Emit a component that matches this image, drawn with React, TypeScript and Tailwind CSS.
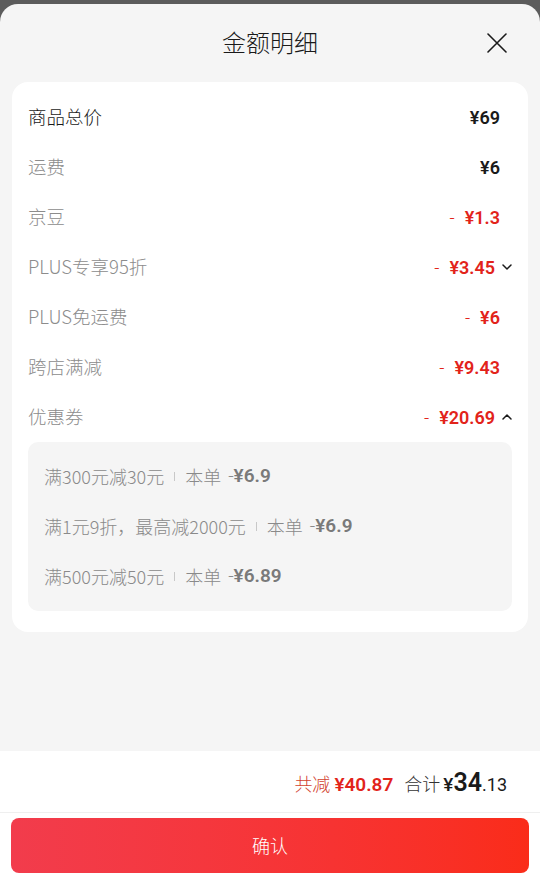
import React from "react";

const cjk = "font-['Noto_Sans_CJK_SC',sans-serif]";
const num = "font-['Roboto','Noto_Sans_CJK_SC',sans-serif]";

interface Row {
  label: string;
  value: string;
  minus?: boolean;
  strong?: boolean;
  chevron?: "up" | "down";
}

const rows: Row[] = [
  { label: "商品总价", value: "¥69", strong: true },
  { label: "运费", value: "¥6" },
  { label: "京豆", value: "¥1.3", minus: true },
  { label: "PLUS专享95折", value: "¥3.45", minus: true, chevron: "down" },
  { label: "PLUS免运费", value: "¥6", minus: true },
  { label: "跨店满减", value: "¥9.43", minus: true },
  { label: "优惠券", value: "¥20.69", minus: true, chevron: "up" },
];

const coupons = [
  { rule: "满300元减30元", amount: "¥6.9" },
  { rule: "满1元9折，最高减2000元", amount: "¥6.9" },
  { rule: "满500元减50元", amount: "¥6.89" },
];

function Chevron({ dir }: { dir: "up" | "down" }) {
  return (
    <svg width="10" height="6" viewBox="0 0 10 6" className="ml-[7px]">
      <path
        d={dir === "down" ? "M1 1l4 4 4-4" : "M1 5l4-4 4 4"}
        fill="none"
        stroke="#1a1a1a"
        strokeWidth="1.5"
        strokeLinecap="round"
        strokeLinejoin="round"
      />
    </svg>
  );
}

export default function App() {
  return (
    <div className={`w-[540px] h-[885px] bg-[#5c5c5c] flex flex-col overflow-hidden ${cjk}`}>
      <div className="h-[4px] shrink-0" />
      <div className="flex-1 flex flex-col bg-[#f5f5f5] rounded-t-[18px]">
        {/* header */}
        <div className="relative h-[78px] shrink-0 flex justify-center pt-[22px]">
          <div className="text-[24px] leading-[32px] font-light text-[#1a1a1a]">金额明细</div>
          <svg
            width="20"
            height="20"
            viewBox="0 0 20 20"
            className="absolute right-[33px] top-[29px]"
          >
            <path d="M1 1l18 18M19 1L1 19" stroke="#1a1a1a" strokeWidth="1.6" strokeLinecap="round" />
          </svg>
        </div>

        {/* detail card */}
        <div className="mx-[12px] bg-white rounded-[16px] px-[16px] pt-[10px] pb-[21px]">
          {rows.map((r) => (
            <div key={r.label} className="h-[50px] flex items-center justify-between">
              <span
                className={`text-[18.5px] font-light ${r.strong ? "text-[#1a1a1a]" : "text-[#8c8c8c]"}`}
              >
                {r.label}
              </span>
              <div className={`flex items-center ${r.chevron ? "" : "pr-[12px]"}`}>
                {r.minus ? (
                  <span className={`${num} text-[18px] font-light text-[#e2231a] mr-[10px]`}>-</span>
                ) : null}
                <span
                  className={`${num} text-[18px] font-semibold ${
                    r.minus ? "text-[#e2231a]" : "text-[#1a1a1a]"
                  }`}
                >
                  {r.value}
                </span>
                {r.chevron ? <Chevron dir={r.chevron} /> : null}
              </div>
            </div>
          ))}

          <div className="bg-[#f5f5f5] rounded-[10px] px-[16px] pt-[9px] pb-[10px]">
            {coupons.map((c) => (
              <div
                key={c.rule}
                className="h-[50px] flex items-center text-[18px] font-light text-[#8a8a8a]"
              >
                <span>{c.rule}</span>
                <span className="mx-[10px] w-[1px] h-[9px] bg-[#c8c8c8]" />
                <span>本单</span>
                <span className={`${num} text-[19px] ml-[7px]`}>-</span>
                <span className={`${num} text-[19px] font-semibold text-[#7a7a7a]`}>{c.amount}</span>
              </div>
            ))}
          </div>
        </div>

        <div className="flex-1" />

        {/* bottom bar */}
        <div className="bg-white h-[134px] shrink-0 flex flex-col">
          <div className="h-[62px] flex items-baseline justify-end pr-[33px] pt-[13px] border-b border-[#efefef]">
            <span className="text-[18px] font-light text-[#d2412f]">共减</span>
            <span className={`${num} text-[19px] font-semibold text-[#e2231a] ml-[4px]`}>
              ¥40.87
            </span>
            <span className="text-[18px] font-light text-[#333] ml-[11px]">合计</span>
            <span className={`${num} text-[19px] font-medium text-[#1a1a1a] ml-[3px]`}>¥</span>
            <span className={`${num} text-[25px] font-semibold text-[#1a1a1a]`}>34</span>
            <span className={`${num} text-[18px] text-[#1a1a1a]`}>.13</span>
          </div>
          <button className="mx-[11px] mt-[5px] h-[55px] rounded-[8px] bg-gradient-to-r from-[#f23c4c] to-[#fa2c19] text-white text-[18px] font-light">
            确认
          </button>
        </div>
      </div>
    </div>
  );
}
